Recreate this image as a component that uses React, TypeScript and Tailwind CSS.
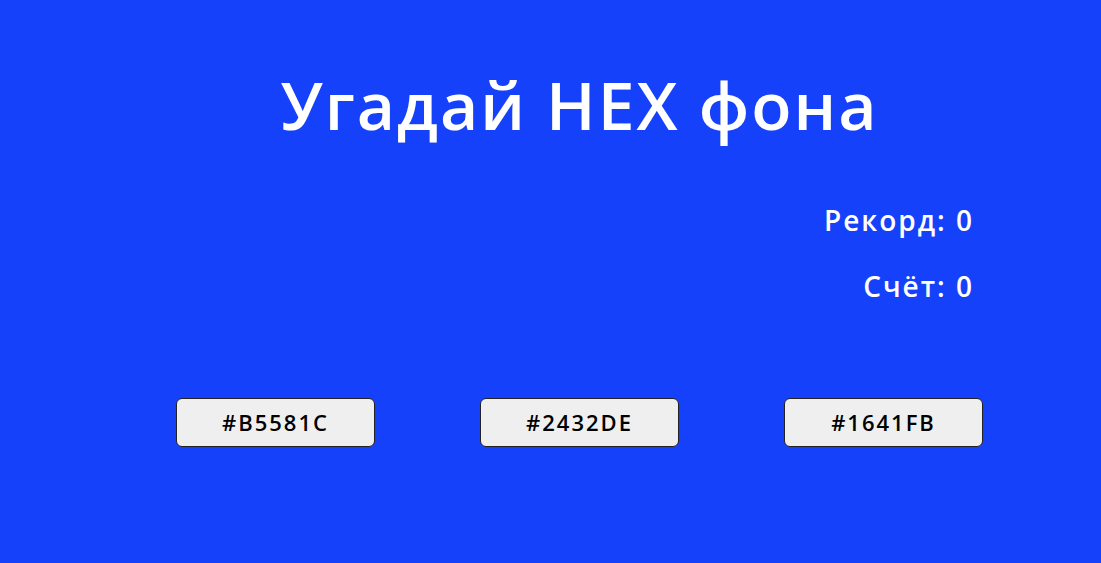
export default function App() {
  const options = ["#B5581C", "#2432DE", "#1641FB"];
  return (
    <div
      className="min-h-[563px] w-full bg-[#1641FB] text-white"
      style={{ fontFamily: '"Open Sans", "Noto Sans", sans-serif' }}
    >
      <div className="flex flex-col pl-[58px]">
        <h1 className="mt-[61px] text-center text-[66px] font-semibold leading-[86px] tracking-[2px]">
          Угадай HEX фона
        </h1>
        <div className="mt-[57px] flex flex-col items-end gap-[34px] pr-[127px] text-[28px] font-semibold leading-[32px] tracking-[2px]">
          <div>Рекорд: 0</div>
          <div>Счёт: 0</div>
        </div>
        <div className="mt-[96px] flex justify-center gap-[105px]">
          {options.map((o) => (
            <button
              key={o}
              className="h-[49px] w-[199px] rounded-[6px] border border-[#222] bg-[#efefef] text-[22px] font-semibold tracking-[2px] text-black"
            >
              {o}
            </button>
          ))}
        </div>
      </div>
    </div>
  );
}
